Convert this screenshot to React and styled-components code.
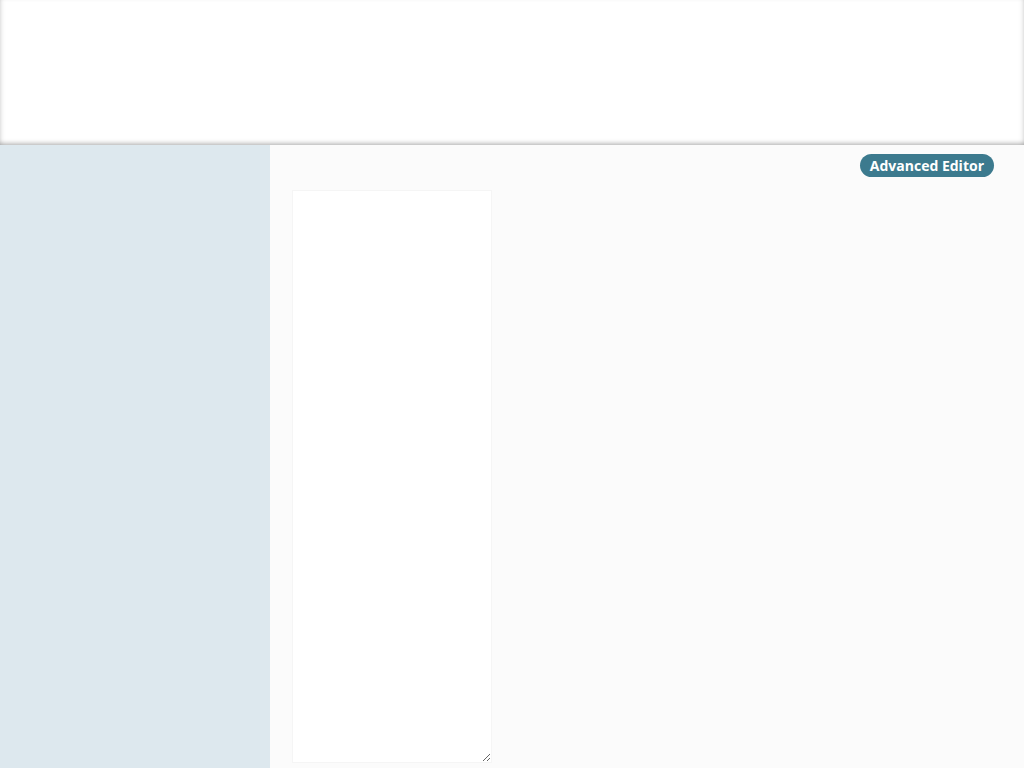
import React from 'react';
import styled, { createGlobalStyle } from 'styled-components';

const GlobalStyle = createGlobalStyle`
  html, body {
    margin: 0;
    padding: 0;
    height: 100%;
  }
  body {
    font-family: "Open Sans", "Liberation Sans", sans-serif;
    background: #fbfbfb;
    overflow: hidden;
  }
  #root {
    height: 100%;
  }
`;

const Page = styled.div`
  display: flex;
  flex-direction: column;
  height: 100vh;
`;

const Header = styled.header`
  height: 145px;
  flex-shrink: 0;
  background: #ffffff;
  box-shadow: inset 4px 0 5px -3px rgba(0, 0, 0, 0.12),
    inset -4px 0 5px -3px rgba(0, 0, 0, 0.12),
    inset 0 -4px 4px -2px rgba(0, 0, 0, 0.25);
`;

const Body = styled.div`
  flex: 1;
  display: flex;
  min-height: 0;
`;

const Sidebar = styled.aside`
  width: 270px;
  flex-shrink: 0;
  background: #dde8ee;
`;

const Main = styled.main`
  flex: 1;
  display: flex;
  flex-direction: column;
  padding: 9px 30px 5px 22px;
  background: #fbfbfb;
  min-height: 0;
`;

const Toolbar = styled.div`
  display: flex;
  justify-content: flex-end;
  margin-bottom: 13px;
`;

const EditorButton = styled.button`
  font-family: "Open Sans", "Liberation Sans", sans-serif;
  font-size: 14px;
  font-weight: 700;
  line-height: 19px;
  color: #ffffff;
  background: #3c7a8e;
  border: none;
  border-radius: 12px;
  padding: 2px 10px;
  cursor: pointer;
`;

const Editor = styled.textarea`
  width: 200px;
  flex: 1;
  box-sizing: border-box;
  border: 1px solid #f5f5f5;
  background: #ffffff;
  resize: vertical;
  outline: none;
  font-family: "Open Sans", "Liberation Sans", sans-serif;
  font-size: 14px;
`;

export default function App() {
  return (
    <>
      <GlobalStyle />
      <Page>
        <Header />
        <Body>
          <Sidebar />
          <Main>
            <Toolbar>
              <EditorButton>Advanced Editor</EditorButton>
            </Toolbar>
            <Editor />
          </Main>
        </Body>
      </Page>
    </>
  );
}
